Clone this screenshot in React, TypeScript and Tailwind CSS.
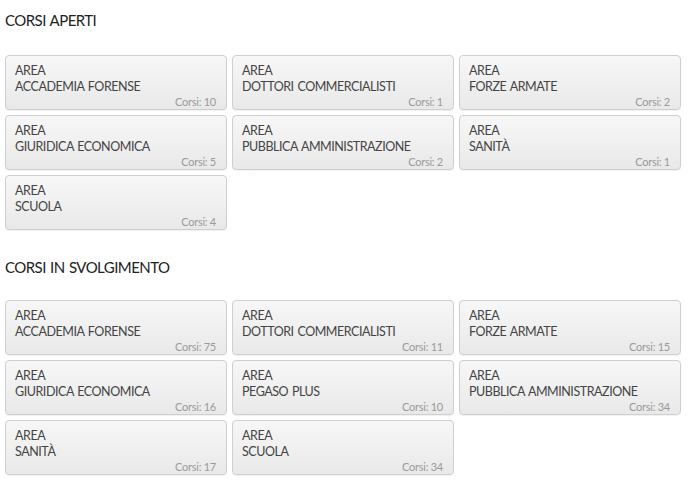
import React from 'react';

type Area = { name: string; count: number };

const aperti: Area[] = [
  { name: 'ACCADEMIA FORENSE', count: 10 },
  { name: 'DOTTORI COMMERCIALISTI', count: 1 },
  { name: 'FORZE ARMATE', count: 2 },
  { name: 'GIURIDICA ECONOMICA', count: 5 },
  { name: 'PUBBLICA AMMINISTRAZIONE', count: 2 },
  { name: 'SANITÀ', count: 1 },
  { name: 'SCUOLA', count: 4 },
];

const inCorso: Area[] = [
  { name: 'ACCADEMIA FORENSE', count: 75 },
  { name: 'DOTTORI COMMERCIALISTI', count: 11 },
  { name: 'FORZE ARMATE', count: 15 },
  { name: 'GIURIDICA ECONOMICA', count: 16 },
  { name: 'PEGASO PLUS', count: 10 },
  { name: 'PUBBLICA AMMINISTRAZIONE', count: 34 },
  { name: 'SANITÀ', count: 17 },
  { name: 'SCUOLA', count: 34 },
];

const AreaCard = ({ area }: { area: Area }) => (
  <div className="h-[55px] rounded-[4px] border border-[#cfcfcf] bg-gradient-to-b from-[#f7f7f7] to-[#e9e9e9] pl-[9px] pr-[10px] pt-[7px] flex flex-col shadow-[0_1px_1px_rgba(0,0,0,0.06)]">
    <div className="text-[12.5px] leading-[16px] tracking-[-0.45px] [word-spacing:1px] text-[#444]">AREA</div>
    <div className="text-[12.5px] leading-[16px] tracking-[-0.45px] [word-spacing:1px] text-[#444]">{area.name}</div>
    <div className="mt-auto text-right text-[11px] leading-[13px] tracking-[-0.25px] text-[#9a9a9a] pb-[2px]">Corsi: {area.count}</div>
  </div>
);

const Section = ({ title, items, gapTop }: { title: string; items: Area[]; gapTop: string }) => (
  <div>
    <h2 className="text-[15px] leading-[20px] tracking-[-0.55px] [word-spacing:1px] text-[#222] pl-[5px]">{title}</h2>
    <div className={`${gapTop} grid grid-cols-[222px_222px_222px] gap-x-[5px] gap-y-[5px] pl-[5px]`}>
      {items.map((a) => (
        <AreaCard key={a.name} area={a} />
      ))}
    </div>
  </div>
);

export default function App() {
  return (
    <div className="w-[688px] h-[483px] bg-white pt-[10px] font-['Lato','Liberation_Sans',sans-serif] overflow-hidden">
      <Section title="CORSI APERTI" items={aperti} gapTop="mt-[25px]" />
      <div className="h-[27px]" />
      <Section title="CORSI IN SVOLGIMENTO" items={inCorso} gapTop="mt-[23px]" />
    </div>
  );
}
